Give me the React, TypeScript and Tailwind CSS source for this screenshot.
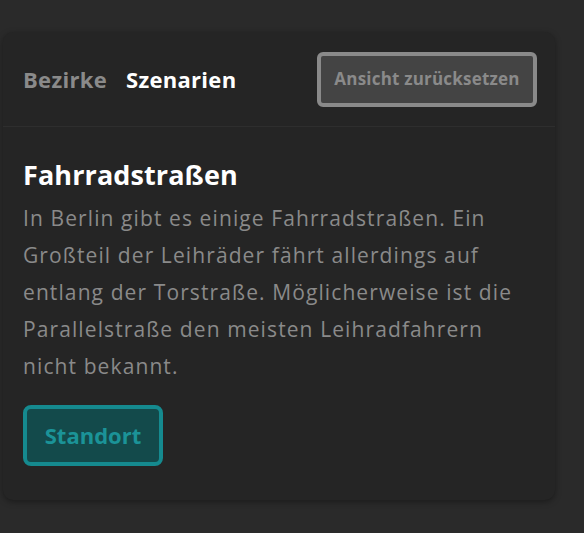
import React, { useState } from 'react';

type Tab = 'bezirke' | 'szenarien';

const tabs: { id: Tab; label: string }[] = [
  { id: 'bezirke', label: 'Bezirke' },
  { id: 'szenarien', label: 'Szenarien' },
];

export default function App() {
  const [active, setActive] = useState<Tab>('szenarien');

  return (
    <div
      className="min-h-screen w-full bg-[#2a2a2a] pt-[32px] pl-[3px]"
      style={{ fontFamily: '"Open Sans", "Noto Sans", sans-serif' }}
    >
      <div className="w-[552px] h-[468px] rounded-[10px] bg-[#252525] shadow-[0_2px_6px_rgba(0,0,0,0.35)] flex flex-col">
        {/* Header */}
        <div className="flex items-center justify-between px-5 h-[95px] border-b border-[#2e2e2e]">
          <div className="flex items-center gap-[19px]">
            {tabs.map((tab) => (
              <button
                key={tab.id}
                onClick={() => setActive(tab.id)}
                className={`text-[22px] font-bold tracking-[0.3px] ${
                  active === tab.id ? 'text-white' : 'text-[#8a8a8a]'
                }`}
              >
                {tab.label}
              </button>
            ))}
          </div>
          <button className="w-[220px] h-[55px] mr-[-2px] rounded-[6px] border-4 border-[#8a8a8a] bg-[#444444] text-[17px] font-bold tracking-[0.2px] text-[#8a8a8a]">
            Ansicht zurücksetzen
          </button>
        </div>

        {/* Content */}
        <div className="px-5 pt-[30px]">
          <h2 className="text-[27px] leading-[36px] font-bold text-white tracking-[0.1px]">Fahrradstraßen</h2>
          <p className="mt-[7px] text-[21px] leading-[37px] tracking-[1.1px] text-[#8a8a8a]">
            In Berlin gibt es einige Fahrradstraßen. Ein Großteil der Leihräder fährt allerdings auf entlang der
            Torstraße. Möglicherweise ist die Parallelstraße den meisten Leihradfahrern nicht bekannt.
          </p>
          <button className="mt-[20px] w-[140px] h-[61px] rounded-[8px] border-4 border-[#158a8f] bg-[#134a4b] text-[22px] font-bold text-[#1b9398]">
            Standort
          </button>
        </div>
      </div>
    </div>
  );
}
